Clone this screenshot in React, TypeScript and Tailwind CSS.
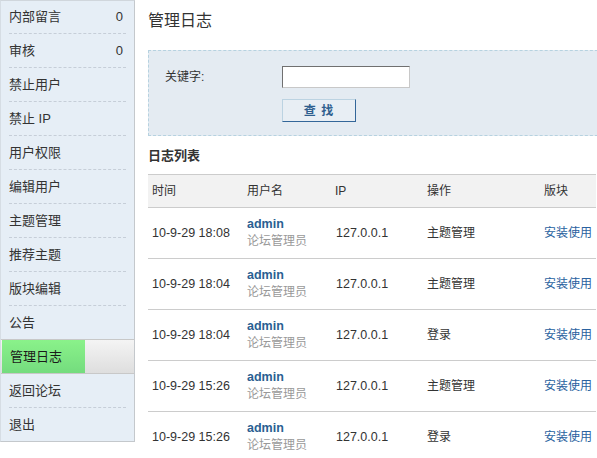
import React from "react";

const menu: { label: string; count?: string }[] = [
  { label: "内部留言", count: "0" },
  { label: "审核", count: "0" },
  { label: "禁止用户" },
  { label: "禁止 IP" },
  { label: "用户权限" },
  { label: "编辑用户" },
  { label: "主题管理" },
  { label: "推荐主题" },
  { label: "版块编辑" },
  { label: "公告" },
  { label: "管理日志" },
  { label: "返回论坛" },
  { label: "退出" },
];

const rows = [
  { time: "10-9-29 18:08", action: "主题管理" },
  { time: "10-9-29 18:04", action: "主题管理" },
  { time: "10-9-29 18:04", action: "登录" },
  { time: "10-9-29 15:26", action: "主题管理" },
  { time: "10-9-29 15:26", action: "登录" },
];

const font = { fontFamily: '"Liberation Sans", "Noto Sans CJK SC", sans-serif' };

export default function App() {
  return (
    <div
      className="w-[597px] h-[458px] overflow-hidden bg-white text-[#333] flex items-start"
      style={font}
    >
      {/* Sidebar */}
      <div className="w-[135px] shrink-0 bg-[#e6eef6] border-t border-l border-r border-b border-t-[#d0d6dc] border-l-[#d6dde4] border-r-[#c4c8cc] border-b-[#c4c8cc]">
        {menu.map((m, i) => {
          const active = i === 10;
          const beforeActive = i === 9;
          const last = i === menu.length - 1;
          if (active) {
            return (
              <div
                key={m.label}
                className="-mt-px h-[35px] border-y border-[#c8c8c8] bg-gradient-to-b from-[#f4f4f4] to-[#dedede] flex"
              >
                <div className="ml-px w-[83px] h-full bg-gradient-to-b from-[#8af28a] to-[#74dc7e] flex items-center pl-[8px] text-[13px] text-[#1a1a1a]">
                  {m.label}
                </div>
              </div>
            );
          }
          return (
            <div
              key={m.label}
              className={
                (i === 0 ? "h-[33px] " : last ? "h-[33px] " : "h-[34px] ") +
                (beforeActive ? "border-b border-[#c8c8c8]" : "")
              }
            >
              <div
                className={
                  "mx-[8px] h-full flex items-center justify-between text-[13px] text-[#333] " +
                  (beforeActive || last ? "" : "border-b border-dashed border-[#c6ced8]")
                }
              >
                <span>{m.label}</span>
                {m.count && <span className="pr-[3px] text-[13px]">{m.count}</span>}
              </div>
            </div>
          );
        })}
      </div>

      {/* Main */}
      <div className="ml-[13px] w-[448px] shrink-0">
        <div className="pt-[10px] leading-[22px] text-[16px] text-[#333]">管理日志</div>

        <div className="mt-[18px] w-[470px] bg-[#e4ebf2] border border-dashed border-[#b6d2e0] pl-[16px] pt-[15px] pb-[13px]">
          <div className="flex items-center">
            <div className="w-[117px] text-[12px] text-[#333]">关键字:</div>
            <div className="w-[128px] h-[22px] bg-white border border-t-[#707070] border-l-[#707070] border-r-[#c8c8c8] border-b-[#c8c8c8]" />
          </div>
          <div className="mt-[11px] ml-[117px] w-[74px] h-[23px] flex items-center justify-center border border-t-[#bcd3e2] border-l-[#bcd3e2] border-r-[#336699] border-b-[#336699] bg-[#e8eef4] text-[12px] font-bold text-[#2f5f8f] tracking-[1px]">
            查 找
          </div>
        </div>

        <div className="mt-[11px] leading-[18px] text-[13px] font-bold text-[#333]">日志列表</div>

        <div className="mt-[9px] text-[12px]">
          <div className="grid grid-cols-[95px_88px_92px_117px_1fr] h-[34px] items-center bg-[#f2f2f2] border-y border-[#cccccc]">
            <div className="pl-[4px]">时间</div>
            <div className="pl-[4px]">用户名</div>
            <div className="pl-[4px]">IP</div>
            <div className="pl-[4px]">操作</div>
            <div className="pl-[4px]">版块</div>
          </div>
          {rows.map((r, i) => (
            <div
              key={i}
              className="grid grid-cols-[95px_88px_92px_117px_1fr] h-[51px] items-center border-b border-[#cccccc]"
            >
              <div className="pl-[4px] text-[12.5px]">{r.time}</div>
              <div className="pl-[4px] leading-[17px]">
                <div className="font-bold text-[#2b5f92] text-[12.5px]">admin</div>
                <div className="text-[#999]">论坛管理员</div>
              </div>
              <div className="pl-[5px] text-[12.5px]">127.0.0.1</div>
              <div className="pl-[4px]">{r.action}</div>
              <div className="pl-[4px] text-[#2a62a0]">安装使用</div>
            </div>
          ))}
        </div>
      </div>
    </div>
  );
}
